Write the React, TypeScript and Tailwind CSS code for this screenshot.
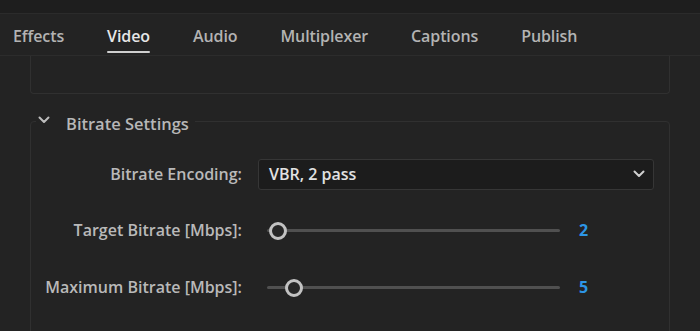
import React from 'react';

const tabs = ['Effects', 'Video', 'Audio', 'Multiplexer', 'Captions', 'Publish'];

const Chevron = ({ className }: { className?: string }) => (
  <svg width="12" height="8" viewBox="0 0 12 8" className={className} fill="none">
    <path d="M1.5 1.5 L6 6 L10.5 1.5" stroke="currentColor" strokeWidth="2" strokeLinecap="round" strokeLinejoin="round" />
  </svg>
);

const Slider = ({ offset, value }: { offset: number; value: number }) => (
  <div className="flex items-center">
    <div className="relative ml-[9px] h-[18px] w-[293px]">
      <div className="absolute left-0 right-0 top-[8px] h-[3px] rounded-full bg-[#505050]" />
      <div
        className="absolute top-[0.5px] h-[18px] w-[18px] -translate-x-1/2 rounded-full border-[3px] border-[#c2c2c2] bg-[#262626]"
        style={{ left: offset }}
      />
    </div>
    <span className="ml-[19px] text-[16px] font-bold text-[#2d96e6]">{value}</span>
  </div>
);

export default function App() {
  return (
    <div className="h-[331px] w-[700px] overflow-hidden bg-[#232323] font-['Open_Sans',sans-serif] text-[#b9b9b9]">
      {/* top strip */}
      <div className="h-[14px] border-b border-[#2b2b2b] bg-[#1e1e1e]" />

      {/* tabs */}
      <div className="flex h-[42px] items-stretch gap-[43px] border-b border-[#2c2c2c] pl-[13px]">
        {tabs.map((t) => (
          <div key={t} className="relative flex items-center pt-[2px] text-[16px] font-semibold tracking-[-0.1px]">
            <span className={t === 'Video' ? 'text-[#e6e6e6]' : 'text-[#b3b3b3]'}>{t}</span>
            {t === 'Video' && <div className="absolute bottom-[2px] left-0 right-0 h-[2px] rounded-full bg-[#cfcfcf]" />}
          </div>
        ))}
      </div>

      {/* previous panel (cut off) */}
      <div className="mx-[30px] h-[38px] rounded-b-[4px] border-x border-b border-[#303030]" />

      {/* Bitrate settings */}
      <fieldset className="mx-[30px] mt-[13px] h-[260px] rounded-t-[4px] border border-[#303030]">
        <legend className="ml-[5px] flex items-center pr-[6px]">
          <Chevron className="ml-[2px] -mt-[3px] text-[#bdbdbd]" />
          <span className="ml-[16px] mt-[5px] text-[16.5px] font-semibold text-[#b7b7b7]">Bitrate Settings</span>
        </legend>

        <div className="mt-[22px] grid grid-cols-[211px_1fr] items-center gap-x-[16px] gap-y-0 pr-[15px] text-[16px] font-semibold">
          <div className="flex h-[31px] items-center justify-end">Bitrate Encoding:</div>
          <div className="flex h-[31px] items-center justify-between rounded-[3px] border border-[#363636] bg-[#1c1c1c] pl-[10px] pr-[8px] text-[#e2e2e2]">
            <span className="text-[16px]">VBR, 2 pass</span>
            <Chevron className="text-[#d0d0d0]" />
          </div>

          <div className="mt-[25px] flex h-[31px] items-center justify-end">Target Bitrate [Mbps]:</div>
          <div className="mt-[25px]">
            <Slider offset={11} value={2} />
          </div>

          <div className="mt-[26px] flex h-[31px] items-center justify-end">Maximum Bitrate [Mbps]:</div>
          <div className="mt-[26px]">
            <Slider offset={27} value={5} />
          </div>
        </div>
      </fieldset>
    </div>
  );
}
